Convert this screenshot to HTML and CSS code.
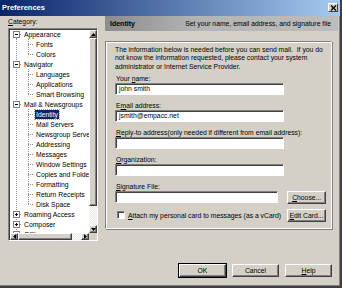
FILE: index.html
```html
<!DOCTYPE html>
<html lang="en">
<head>
  <meta charset="UTF-8">
  <title>Preferences</title>
  <link rel="stylesheet" href="styles.css">
</head>
<body>

  <div class="window">
    <div class="titlebar">
      <span class="title">Preferences</span>
      <span class="close">
        <svg width="7" height="6" viewBox="0 0 7 6"><path d="M1 0.5l5 5M6 0.5l-5 5" stroke="#000" stroke-width="1.3"/></svg>
      </span>
    </div>

    <div class="main">
      <div class="sidebar">
        <div class="cat-label"><u>C</u>ategory:</div>
        <div class="tree">
          <div class="tree-list">
            <div class="row"><i class="c exp first"><svg width="7" height="7"><rect x=".5" y=".5" width="6" height="6" fill="#fff" stroke="#808080"/><path d="M2 3.5h3" stroke="#000"/></svg></i><span>Appearance</span></div>
            <div class="row"><i class="c v"></i><i class="c t"></i><span>Fonts</span></div>
            <div class="row"><i class="c v"></i><i class="c l"></i><span>Colors</span></div>
            <div class="row"><i class="c exp"><svg width="7" height="7"><rect x=".5" y=".5" width="6" height="6" fill="#fff" stroke="#808080"/><path d="M2 3.5h3" stroke="#000"/></svg></i><span>Navigator</span></div>
            <div class="row"><i class="c v"></i><i class="c t"></i><span>Languages</span></div>
            <div class="row"><i class="c v"></i><i class="c t"></i><span>Applications</span></div>
            <div class="row"><i class="c v"></i><i class="c l"></i><span>Smart Browsing</span></div>
            <div class="row"><i class="c exp"><svg width="7" height="7"><rect x=".5" y=".5" width="6" height="6" fill="#fff" stroke="#808080"/><path d="M2 3.5h3" stroke="#000"/></svg></i><span>Mail &amp; Newsgroups</span></div>
            <div class="row"><i class="c v"></i><i class="c t"></i><span class="selected">Identity</span></div>
            <div class="row"><i class="c v"></i><i class="c t"></i><span>Mail Servers</span></div>
            <div class="row"><i class="c v"></i><i class="c t"></i><span>Newsgroup Servers</span></div>
            <div class="row"><i class="c v"></i><i class="c t"></i><span>Addressing</span></div>
            <div class="row"><i class="c v"></i><i class="c t"></i><span>Messages</span></div>
            <div class="row"><i class="c v"></i><i class="c t"></i><span>Window Settings</span></div>
            <div class="row"><i class="c v"></i><i class="c t"></i><span>Copies and Folders</span></div>
            <div class="row"><i class="c v"></i><i class="c t"></i><span>Formatting</span></div>
            <div class="row"><i class="c v"></i><i class="c t"></i><span>Return Receipts</span></div>
            <div class="row"><i class="c v"></i><i class="c l"></i><span>Disk Space</span></div>
            <div class="row"><i class="c exp"><svg width="7" height="7"><rect x=".5" y=".5" width="6" height="6" fill="#fff" stroke="#808080"/><path d="M2 3.5h3M3.5 2v3" stroke="#000"/></svg></i><span>Roaming Access</span></div>
            <div class="row"><i class="c exp"><svg width="7" height="7"><rect x=".5" y=".5" width="6" height="6" fill="#fff" stroke="#808080"/><path d="M2 3.5h3M3.5 2v3" stroke="#000"/></svg></i><span>Composer</span></div>
            <div class="row"><i class="c exp"><svg width="7" height="7"><rect x=".5" y=".5" width="6" height="6" fill="#fff" stroke="#808080"/><path d="M2 3.5h3M3.5 2v3" stroke="#000"/></svg></i><span>Offline</span></div>
          </div>

          <div class="vscroll">
            <div class="sb-btn"><svg width="5" height="3"><path d="M2.5 0L5 3H0z" fill="#000"/></svg></div>
            <div class="sb-thumb v-thumb"></div>
            <div class="sb-track"></div>
            <div class="sb-btn"><svg width="5" height="3"><path d="M0 0h5L2.5 3z" fill="#000"/></svg></div>
          </div>
          <div class="hscroll">
            <div class="sb-btn"><svg width="3" height="5"><path d="M0 2.5L3 0v5z" fill="#000"/></svg></div>
            <div class="sb-thumb h-thumb"></div>
            <div class="sb-track"></div>
            <div class="sb-btn"><svg width="3" height="5"><path d="M0 0l3 2.5L0 5z" fill="#000"/></svg></div>
          </div>
          <div class="corner"></div>
        </div>
      </div>

      <div class="panel">
        <div class="panel-head">
          <b>Identity</b>
          <span>Set your name, email address, and signature file</span>
        </div>

        <div class="group">
          <p class="intro">The information below is needed before you can send mail.&nbsp; If you do<br>not know the information requested, please contact your system<br>administrator or Internet Service Provider.</p>

          <div class="field">
            <label>Your <u>n</u>ame:</label>
            <div class="input">john smith</div>
          </div>
          <div class="field">
            <label>E<u>m</u>ail address:</label>
            <div class="input">jsmith@empacc.net</div>
          </div>
          <div class="field">
            <label><u>R</u>eply-to address(only needed if different from email address):</label>
            <div class="input"></div>
          </div>
          <div class="field">
            <label><u>O</u>rganization:</label>
            <div class="input"></div>
          </div>
          <div class="field">
            <label><u>S</u>ignature File:</label>
            <div class="input-row">
              <div class="input sig"></div>
              <button class="btn small"><u>C</u>hoose...</button>
            </div>
          </div>
          <div class="check-row">
            <span class="checkbox"></span>
            <span class="check-text"><u>A</u>ttach my personal card to messages (as a vCard)</span>
            <button class="btn small"><u>E</u>dit Card...</button>
          </div>
        </div>
      </div>
    </div>

    <div class="footer">
      <button class="btn default">OK</button>
      <button class="btn">Cancel</button>
      <button class="btn"><u>H</u>elp</button>
    </div>
  </div>

</body>
</html>
```

FILE: styles.css
```css
:root {
  --face: #d4d0c8;
  --shadow: #808080;
  --dark: #404040;
  --select: #0a246a;
}

* {
  box-sizing: border-box;
}

body {
  margin: 0;
  background-color: var(--face);
  font-family: 'Liberation Sans', Arial, sans-serif;
  font-size: 6.8px;
  color: #000;
}

u {
  text-decoration: underline;
}

.window {
  width: 342px;
  height: 288px;
  background-color: var(--face);
  border-right: 2px solid var(--dark);
  border-bottom: 2px solid var(--dark);
  box-shadow: inset -1px -1px var(--shadow);
  display: flex;
  flex-direction: column;
}

.titlebar {
  height: 16px;
  background: linear-gradient(to right, #0a246a, #a6caf0);
  display: flex;
  align-items: center;
  justify-content: space-between;
  padding: 0 2px 1px 2px;
}

.title {
  color: #fff;
  font-weight: bold;
  font-size: 7.5px;
}

.close {
  width: 10px;
  height: 9px;
  background-color: var(--face);
  border: 1px solid;
  border-color: #fff var(--dark) var(--dark) #fff;
  display: flex;
  align-items: center;
  justify-content: center;
}

.main {
  display: flex;
  padding: 1px 0 0 8px;
}

.sidebar {
  width: 90px;
}

.cat-label {
  height: 11px;
  line-height: 10px;
}

.tree {
  width: 90px;
  height: 213px;
  background-color: #fff;
  border: 1px solid;
  border-color: var(--shadow) #fff #fff var(--shadow);
  box-shadow: inset 1px 1px var(--dark);
  padding: 1px 0 0 1px;
  display: grid;
  grid-template-columns: 1fr 8px;
  grid-template-rows: 1fr 7px;
  overflow: hidden;
}

.tree-list {
  overflow: hidden;
  margin-top: -1px;
}

.row {
  display: flex;
  align-items: center;
  height: 10px;
  white-space: nowrap;
}

.row span {
  margin-left: 1px;
  line-height: 9px;
  padding: 0 1px;
}

.row .selected {
  background-color: var(--select);
  color: #fff;
  outline: 1px dotted #a0a0a0;
}

.c {
  flex: none;
  width: 12px;
  height: 10px;
  display: flex;
  align-items: center;
  justify-content: center;
  background-repeat: no-repeat;
}

.c.v {
  background-image: repeating-linear-gradient(#909090 0 1px, transparent 1px 2px);
  background-position: 6px 0;
  background-size: 1px 100%;
}

.c.t {
  background-image:
    repeating-linear-gradient(#909090 0 1px, transparent 1px 2px),
    repeating-linear-gradient(to right, #909090 0 1px, transparent 1px 2px);
  background-position: 6px 0, 6px 5px;
  background-size: 1px 100%, 6px 1px;
}

.c.l {
  background-image:
    repeating-linear-gradient(#909090 0 1px, transparent 1px 2px),
    repeating-linear-gradient(to right, #909090 0 1px, transparent 1px 2px);
  background-position: 6px 0, 6px 5px;
  background-size: 1px 6px, 6px 1px;
}

.c.exp {
  background-image:
    repeating-linear-gradient(#909090 0 1px, transparent 1px 2px),
    repeating-linear-gradient(to right, #909090 0 1px, transparent 1px 2px);
  background-position: 6px 0, 6px 5px;
  background-size: 1px 100%, 6px 1px;
  padding-left: 1px;
}

.c.exp.first {
  background-position: 6px 5px, 6px 5px;
}

.vscroll {
  display: flex;
  flex-direction: column;
}

.hscroll {
  display: flex;
}

.corner {
  background-color: var(--face);
}

.sb-btn {
  flex: none;
  width: 8px;
  height: 8px;
  background-color: var(--face);
  border: 1px solid;
  border-color: #fff var(--dark) var(--dark) #fff;
  box-shadow: inset -1px -1px var(--shadow);
  display: flex;
  align-items: center;
  justify-content: center;
}

.hscroll .sb-btn {
  height: 7px;
}

.sb-thumb {
  background-color: var(--face);
  border: 1px solid;
  border-color: #fff var(--dark) var(--dark) #fff;
  box-shadow: inset -1px -1px var(--shadow);
}

.v-thumb {
  height: 168px;
}

.h-thumb {
  width: 54px;
}

.sb-track {
  flex: 1;
  background: repeating-conic-gradient(#fff 0 25%, #e8e6e2 0 50%) 0 0 / 2px 2px;
}

.panel {
  width: 233px;
  margin-left: 7px;
  margin-top: -1px;
}

.panel-head {
  height: 15px;
  background: linear-gradient(to right, #8c8c8c, #b4b4b4 40%, #bcbcbc);
  display: flex;
  align-items: center;
  justify-content: space-between;
  padding: 0 7px 0 5px;
}

.panel-head b {
  font-size: 7px;
}

.group {
  width: 227px;
  height: 188px;
  margin-top: 10px;
  border: 1px solid;
  border-color: var(--shadow) #fff #fff var(--shadow);
  box-shadow: inset 1px 1px #fff, 1px 1px var(--shadow);
  padding: 4px 5px 0 9px;
}

.intro {
  margin: 0 0 3px 0;
  line-height: 8.3px;
  white-space: nowrap;
}

.field {
  margin-bottom: 6px;
}

.field label {
  display: block;
  line-height: 9px;
  height: 9px;
  padding-left: 1px;
}

.input {
  width: 169px;
  height: 12px;
  background-color: #fff;
  border: 1px solid;
  border-color: var(--shadow) #fff #fff var(--shadow);
  box-shadow: inset 1px 1px var(--dark);
  padding-left: 3px;
  line-height: 10px;
}

.input-row {
  display: flex;
  align-items: center;
  gap: 9px;
}

.input.sig {
  width: 165px;
}

.btn {
  font-family: inherit;
  font-size: 6.8px;
  color: #000;
  width: 47px;
  height: 13px;
  padding: 0;
  background-color: var(--face);
  border: 1px solid;
  border-color: #fff var(--dark) var(--dark) #fff;
  box-shadow: inset -1px -1px var(--shadow);
}

.btn.small {
  width: 39px;
}

.btn.default {
  outline: 1px solid #000;
}

.check-row {
  display: flex;
  align-items: center;
  margin-top: -1px;
  padding-left: 2px;
}

.checkbox {
  width: 8px;
  height: 8px;
  background-color: #fff;
  border: 1px solid;
  border-color: var(--shadow) #fff #fff var(--shadow);
  box-shadow: inset 1px 1px var(--dark);
}

.check-text {
  margin-left: 3px;
  flex: 1;
  white-space: nowrap;
}

.footer {
  display: flex;
  justify-content: flex-end;
  gap: 6px;
  padding-right: 8px;
  margin-top: 23px;
}
```
